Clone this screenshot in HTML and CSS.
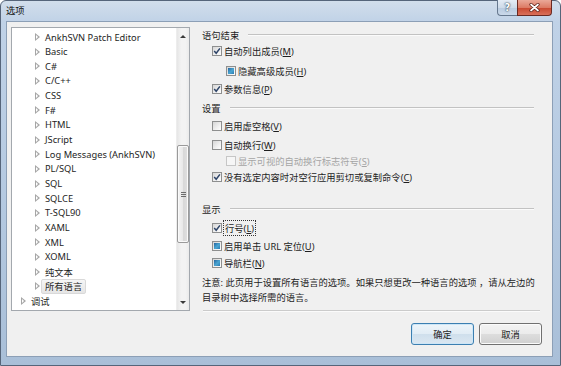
FILE: index.html
```html
<!DOCTYPE html>
<html lang="zh-CN">
  <head>
    <meta charset="UTF-8" />
    <meta name="viewport" content="width=device-width, initial-scale=1.0" />
    <title>选项</title>
    <link rel="stylesheet" href="styles.css">
  </head>

  <body>
    <div class="window">
      <div class="titlebar">
        <span class="title">选项</span>
        <div class="caption-buttons">
          <span class="btn-help">?</span>
          <span class="btn-close">
            <svg width="11" height="9" viewBox="0 0 11 9">
              <path d="M2 1.5 L9 7.5 M9 1.5 L2 7.5" stroke="#5a1e16" stroke-width="3.2" stroke-linecap="round" />
              <path d="M2 1.5 L9 7.5 M9 1.5 L2 7.5" stroke="#fff" stroke-width="1.7" stroke-linecap="round" />
            </svg>
          </span>
        </div>
      </div>

      <div class="client">
        <!-- left tree -->
        <div class="tree">
          <ul class="tree-list">
            <li><span class="arrow"></span><span class="label">AnkhSVN Patch Editor</span></li>
            <li><span class="arrow"></span><span class="label">Basic</span></li>
            <li><span class="arrow"></span><span class="label">C#</span></li>
            <li><span class="arrow"></span><span class="label">C/C++</span></li>
            <li><span class="arrow"></span><span class="label">CSS</span></li>
            <li><span class="arrow"></span><span class="label">F#</span></li>
            <li><span class="arrow"></span><span class="label">HTML</span></li>
            <li><span class="arrow"></span><span class="label">JScript</span></li>
            <li><span class="arrow"></span><span class="label">Log Messages (AnkhSVN)</span></li>
            <li><span class="arrow"></span><span class="label">PL/SQL</span></li>
            <li><span class="arrow"></span><span class="label">SQL</span></li>
            <li><span class="arrow"></span><span class="label">SQLCE</span></li>
            <li><span class="arrow"></span><span class="label">T-SQL90</span></li>
            <li><span class="arrow"></span><span class="label">XAML</span></li>
            <li><span class="arrow"></span><span class="label">XML</span></li>
            <li><span class="arrow"></span><span class="label">XOML</span></li>
            <li><span class="arrow"></span><span class="label">纯文本</span></li>
            <li class="selected"><span class="arrow"></span><span class="label">所有语言</span></li>
            <li class="root"><span class="arrow"></span><span class="label">调试</span></li>
          </ul>
          <div class="scrollbar">
            <span class="sb-btn"><span class="tri-up"></span></span>
            <div class="sb-track">
              <div class="sb-thumb"><span class="grip"></span></div>
            </div>
            <span class="sb-btn"><span class="tri-down"></span></span>
          </div>
        </div>

        <!-- right panel -->
        <div class="panel">
          <div class="group-title">语句结束</div>
          <div class="opt">
            <span class="box"><svg width="8" height="8" viewBox="0 0 8 8"><path d="M1.2 4.1 L3.2 6.3 L6.9 1.4" /></svg></span>
            自动列出成员(<u>M</u>)
          </div>
          <div class="opt sub mt4"><span class="box mixed"></span>隐藏高级成员(<u>H</u>)</div>
          <div class="opt mt2">
            <span class="box"><svg width="8" height="8" viewBox="0 0 8 8"><path d="M1.2 4.1 L3.2 6.3 L6.9 1.4" /></svg></span>
            参数信息(<u>P</u>)
          </div>

          <div class="group-title mt3">设置</div>
          <div class="opt mt2"><span class="box"></span>启用虚空格(<u>V</u>)</div>
          <div class="opt mt3"><span class="box"></span>自动换行(<u>W</u>)</div>
          <div class="opt sub disabled"><span class="box"></span>显示可视的自动换行标志符号(<u>S</u>)</div>
          <div class="opt">
            <span class="box"><svg width="8" height="8" viewBox="0 0 8 8"><path d="M1.2 4.1 L3.2 6.3 L6.9 1.4" /></svg></span>
            没有选定内容时对空行应用剪切或复制命令(<u>C</u>)
          </div>

          <div class="group-title mt16">显示</div>
          <div class="opt mt3">
            <span class="box"><svg width="8" height="8" viewBox="0 0 8 8"><path d="M1.2 4.1 L3.2 6.3 L6.9 1.4" /></svg></span>
            <span class="focus">行号(<u>L</u>)</span>
          </div>
          <div class="opt mt2"><span class="box mixed"></span>启用单击 URL 定位(<u>U</u>)</div>
          <div class="opt mt1"><span class="box mixed"></span>导航栏(<u>N</u>)</div>

          <p class="note">注意: 此页用于设置所有语言的选项。如果只想更改一种语言的选项 ，请从左边的<br>目录树中选择所需的语言。</p>

          <div class="sep"></div>

          <div class="actions">
            <button class="btn default">确定</button>
            <button class="btn">取消</button>
          </div>
        </div>
      </div>
    </div>
  </body>
</html>
```

FILE: styles.css
```css
* {
  margin: 0;
  padding: 0;
  box-sizing: border-box;
}

body {
  background-color: #fff;
  font-family: "Noto Sans", "Noto Sans CJK SC", sans-serif;
  font-size: 9.3px;
  color: #1e1e1e;
}

u {
  text-decoration-thickness: 1px;
  text-underline-offset: 1px;
}

/* window frame */
.window {
  width: 561px;
  height: 366px;
  display: flex;
  flex-direction: column;
  border: 1px solid #56657a;
  border-radius: 6px 6px 0 0;
  background: linear-gradient(180deg, #d2deeb 0, #c0d2e7 21px, #b3c8e0 60%, #a9bfd8 100%);
}

.titlebar {
  height: 21px;
  display: flex;
  justify-content: space-between;
  align-items: flex-start;
  padding-left: 5px;
}

.title {
  line-height: 19px;
  color: #101010;
}

.caption-buttons {
  display: flex;
  margin-right: 8px;
  margin-top: -1px;
}

.btn-help,
.btn-close {
  height: 16px;
  display: flex;
  align-items: center;
  justify-content: center;
}

.btn-help {
  width: 20px;
  border: 1px solid #67798f;
  border-top: none;
  border-right: none;
  border-radius: 0 0 0 4px;
  background: linear-gradient(180deg, #e4ecf5 0, #cfdbe9 50%, #b9cbe0 51%, #cad9ea 100%);
  color: #fff;
  font: bold 10px "DejaVu Sans", sans-serif;
  text-shadow: 0 0 1px #2d3b4d, 0 0 2px #2d3b4d;
}

.btn-close {
  width: 35px;
  border: 1px solid #6b2a22;
  border-top: none;
  border-radius: 0 0 4px 0;
  background: linear-gradient(180deg, #eaa898 0, #dc7b65 50%, #c8472e 51%, #d9705a 100%);
}

/* client area */
.client {
  flex: 1;
  display: flex;
  margin: 0 8px 9px 6px;
  padding: 5px 10px 0 4px;
  background-color: #f0f0f0;
  box-shadow: 0 0 0 1px #8c9fb6;
}

/* tree view */
.tree {
  width: 179px;
  height: 284px;
  display: flex;
  border: 1px solid #a3a8ae;
  background-color: #fff;
}

.tree-list {
  flex: 1;
  list-style: none;
  padding-top: 1.7px;
  overflow: hidden;
}

.tree-list li {
  height: 14.67px;
  display: flex;
  align-items: center;
  padding-left: 23px;
  white-space: nowrap;
}

.tree-list li.root {
  padding-left: 9px;
}

.arrow {
  position: relative;
  flex: none;
  width: 5px;
  height: 8px;
  margin-right: 1px;
}

.arrow::before,
.arrow::after {
  content: "";
  position: absolute;
  border-style: solid;
  border-color: transparent;
}

.arrow::before {
  left: 0;
  top: 0;
  border-width: 4px 0 4px 5px;
  border-left-color: #a6a6a6;
}

.arrow::after {
  left: 1px;
  top: 2px;
  border-width: 2px 0 2px 2.5px;
  border-left-color: #fff;
}

.label {
  height: 100%;
  display: flex;
  align-items: center;
  padding: 0 3px;
  border: 1px solid transparent;
  border-radius: 2px;
}

.selected .label {
  background: linear-gradient(180deg, #f6f6f6, #e5e5e5);
  border-color: #d9d9d9;
}

/* scrollbar */
.scrollbar {
  width: 13px;
  display: flex;
  flex-direction: column;
  border-left: 1px solid #ededed;
  background: linear-gradient(90deg, #e6e6e6, #f3f3f3 35%, #f3f3f3 70%, #ebebeb);
}

.sb-btn {
  height: 16px;
  display: flex;
  align-items: center;
  justify-content: center;
}

.tri-up,
.tri-down {
  width: 0;
  height: 0;
  border-left: 3px solid transparent;
  border-right: 3px solid transparent;
}

.tri-up {
  border-bottom: 3px solid #3a3a3a;
}

.tri-down {
  border-top: 3px solid #3a3a3a;
}

.sb-track {
  flex: 1;
}

.sb-thumb {
  height: 98px;
  margin: 101px 0 0 0;
  display: flex;
  align-items: center;
  justify-content: center;
  border: 1px solid #9a9a9a;
  border-radius: 2px;
  background: linear-gradient(90deg, #f4f4f4, #e8e8e8 50%, #d8d8d8 51%, #e0e0e0);
  box-shadow: inset 0 0 0 1px #fafafa;
}

.grip {
  width: 5px;
  height: 5px;
  background: repeating-linear-gradient(180deg, #6d6d6d 0, #6d6d6d 1px, transparent 1px, transparent 2px);
}

/* options panel */
.panel {
  flex: 1;
  display: flex;
  flex-direction: column;
  margin-left: 12px;
}

.group-title {
  height: 16px;
  display: flex;
  align-items: center;
  margin-right: 8px;
}

.group-title::after {
  content: "";
  flex: 1;
  margin-left: 9px;
  border-top: 1px solid #c2c2c2;
  border-bottom: 1px solid #fbfbfb;
}

.opt {
  height: 16px;
  display: flex;
  align-items: center;
  padding-left: 10px;
  white-space: nowrap;
}

.opt.sub {
  padding-left: 24px;
}

.box {
  flex: none;
  width: 10px;
  height: 10px;
  margin-right: 2px;
  display: flex;
  align-items: center;
  justify-content: center;
  border: 1px solid #8e8f8f;
  background: linear-gradient(135deg, #d6d6d6, #f2f2f2 65%, #fdfdfd);
}

.box path {
  fill: none;
  stroke: #2e4468;
  stroke-width: 1.5;
}

.box.mixed::after {
  content: "";
  width: 6px;
  height: 6px;
  background: linear-gradient(135deg, #2565a0, #4aa6d2 55%, #2a79b2);
}

.opt.disabled {
  color: #a5a5a5;
}

.opt.disabled .box {
  border-color: #c6c6c6;
  background: #f6f6f6;
}

.focus {
  outline: 1px dotted #333;
  padding: 0 1px;
}

.mt1 { margin-top: 1px; }
.mt2 { margin-top: 2px; }
.mt3 { margin-top: 3px; }
.mt4 { margin-top: 4px; }
.mt16 { margin-top: 16px; }

.note {
  margin-top: 4px;
  line-height: 15px;
  white-space: nowrap;
}

.sep {
  margin: 5px 2px 0 1px;
  border-top: 1px solid #cbcbcb;
  border-bottom: 1px solid #fbfbfb;
}

.actions {
  display: flex;
  justify-content: flex-end;
  gap: 5px;
  margin-top: 11px;
}

.btn {
  width: 63px;
  height: 22px;
  border: 1px solid #707070;
  border-radius: 3px;
  background: linear-gradient(180deg, #f3f3f3 0, #ebebeb 50%, #dddddd 51%, #d0d0d0 100%);
  box-shadow: inset 0 0 0 1px #fbfbfb;
  font: inherit;
  color: #1e1e1e;
}

.btn.default {
  border-color: #3c7fb1;
  background: linear-gradient(180deg, #eef5fa 0, #e1ecf5 50%, #cfdfec 51%, #dbe7f1 100%);
  box-shadow: inset 0 0 0 1px #cde6f7;
}
```
